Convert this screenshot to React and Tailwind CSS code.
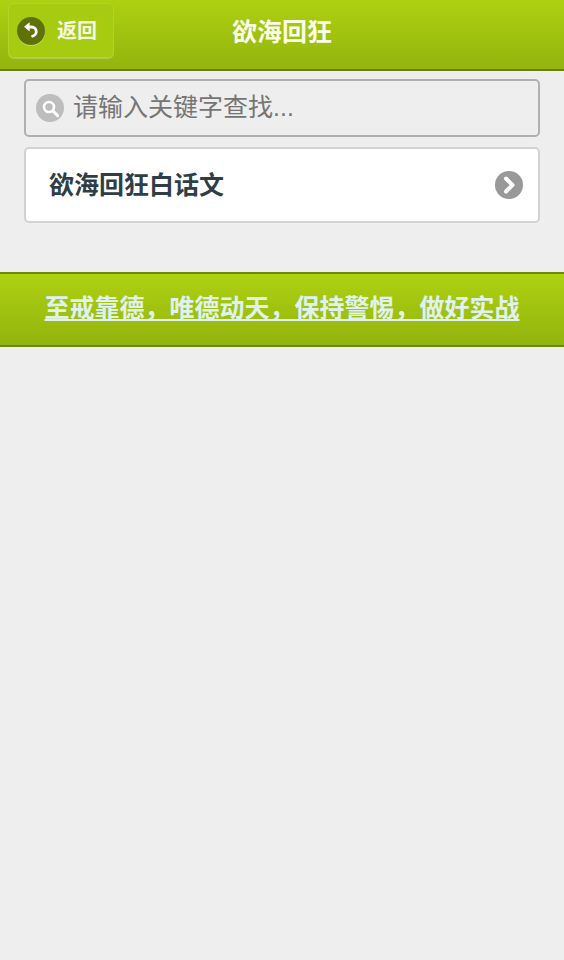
const FONT = "font-['Liberation_Sans','Noto_Sans_CJK_SC',sans-serif]";
const SLOGAN = "至戒靠德\uFF0C唯德动天\uFF0C保持警惕\uFF0C做好实战";

function BackIcon() {
  return (
    <span className="flex h-7 w-7 items-center justify-center rounded-full bg-[#5f7208] shadow-[0_1px_0_rgba(255,255,255,0.35)]">
      <svg width="22" height="22" viewBox="0 0 22 22" fill="none">
        <path d="M8 7h3.6a4.6 4.6 0 0 1 1 9.1" stroke="#fff" strokeWidth="2.8" strokeLinecap="round" />
        <path d="M9.6 2.2v9.4L4 6.8z" fill="#fff" />
      </svg>
    </span>
  );
}

function SearchIcon() {
  return (
    <span className="flex h-7 w-7 shrink-0 items-center justify-center rounded-full bg-[#bdbdbd]">
      <svg width="24" height="24" viewBox="0 0 24 24" fill="none">
        <circle cx="11" cy="11" r="5" stroke="#fff" strokeWidth="2.6" />
        <path d="M15 15l4.6 4.6" stroke="#fff" strokeWidth="3" strokeLinecap="round" />
      </svg>
    </span>
  );
}

function ChevronIcon() {
  return (
    <span className="flex h-7 w-7 shrink-0 items-center justify-center rounded-full bg-[#999999]">
      <svg width="22" height="22" viewBox="0 0 22 22" fill="none">
        <path d="M8 4.5L14.5 11 8 17.5" stroke="#fff" strokeWidth="4" strokeLinecap="round" strokeLinejoin="round" />
      </svg>
    </span>
  );
}

export default function App() {
  return (
    <div className={["min-h-[960px] bg-[#eeeeee]", FONT].join(" ")}>
      {/* Header */}
      <header className="relative flex h-[71px] items-center justify-center border-b-2 border-[#6b7f10] bg-gradient-to-b from-[#aed112] to-[#93b40d]">
        <button className="absolute left-2 top-[3px] flex h-[55px] w-[106px] items-center gap-3 rounded-md border border-[#b2d42a] bg-[#a6cb10] pl-2 shadow-[0_1px_0_rgba(255,255,255,0.25)]">
          <BackIcon />
          <span className="text-[20px] font-bold text-[#f4f8e0]">返回</span>
        </button>
        <h1 className="pb-1 text-[25px] font-bold text-[#fbfde9]">欲海回狂</h1>
      </header>

      <main className="mx-6 mt-2 flex flex-col gap-[10px]">
        {/* Search */}
        <label className="flex h-[58px] items-center gap-[9px] rounded-[5px] border-2 border-[#b0b0b0] bg-[#eeeeee] pl-[10px]">
          <SearchIcon />
          <input
            placeholder="请输入关键字查找..."
            className="w-full bg-transparent text-[25px] outline-none placeholder:text-[#757575]"
          />
        </label>

        {/* List */}
        <div className="flex h-[76px] items-center justify-between rounded-[5px] border-2 border-[#d2d2d2] bg-white pl-[23px] pr-[15px]">
          <span className="pt-px text-[25px] font-bold text-[#2f3e46]">欲海回狂白话文</span>
          <ChevronIcon />
        </div>
      </main>

      {/* Banner */}
      <div className="mt-[49px] flex h-[75px] items-center justify-center border-y-2 border-[#6b8a0c] bg-gradient-to-b from-[#aed112] to-[#93b40d]">
        <a className="pb-px text-[25px] font-bold text-[#e0f2ef] underline">{SLOGAN}</a>
      </div>
    </div>
  );
}
